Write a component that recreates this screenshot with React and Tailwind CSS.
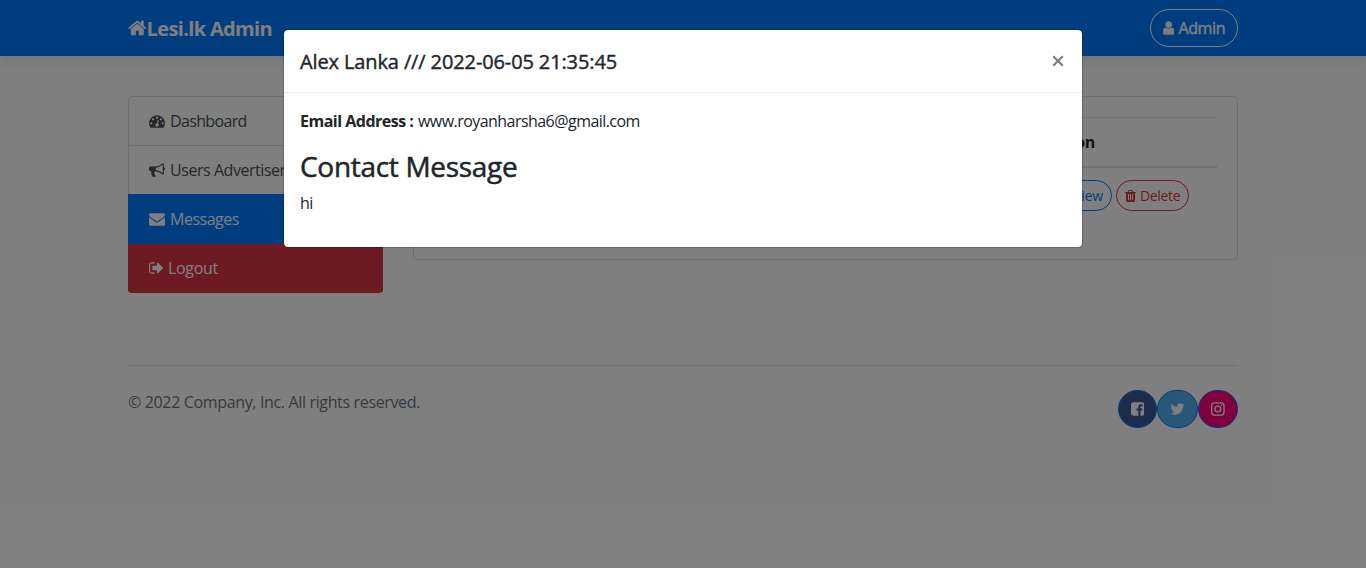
const ICONS = {
  home: ['64 0 1664 1792', 'M1472 992v480q0 26-19 45t-45 19h-384v-384h-256v384h-384q-26 0-45-19t-19-45v-480q0-1 .5-3t.5-3l575-474 575 474q1 2 1 6zm223-69l-62 74q-8 9-21 11h-3q-13 0-21-7l-692-577-692 577q-12 8-24 7-13-2-21-11l-62-74q-8-10-7-23.5t11-21.5l719-599q32-26 76-26t76 26l244 204v-195q0-14 9-23t23-9h192q14 0 23 9t9 23v408l219 182q10 8 11 21.5t-7 23.5z'],
  user: ['256 0 1280 1792', 'M1536 1399q0 109-62.5 187t-150.5 78h-854q-88 0-150.5-78t-62.5-187q0-85 8.5-160.5t31.5-152 58.5-131 94-89 134.5-34.5q131 128 313 128t313-128q76 0 134.5 34.5t94 89 58.5 131 31.5 152 8.5 160.5zm-256-887q0 159-112.5 271.5t-271.5 112.5-271.5-112.5-112.5-271.5 112.5-271.5 271.5-112.5 271.5 112.5 112.5 271.5z'],
  envelope: ['0 0 1792 1792', 'M1792 710v794q0 66-47 113t-113 47h-1472q-66 0-113-47t-47-113v-794q44 49 101 87 362 246 497 345 57 42 92.5 65.5t94.5 48 110 24.5h2q51 0 110-24.5t94.5-48 92.5-65.5q170-123 498-345 57-39 100-87zm0-294q0 79-49 151t-122 123q-376 261-468 325-10 7-42.5 31t-54 38.5-52 32.5-57.5 27-50 9h-2q-23 0-50-9t-57.5-27-52-32.5-54-38.5-42.5-31q-91-64-262-182.5t-205-142.5q-62-42-117-115.5t-55-136.5q0-78 41.5-130t118.5-52h1472q65 0 112.5 47t47.5 113z'],
  signOut: ['64 0 1664 1792', 'M704 1440q0 4 1 20t.5 26.5-3 23.5-10 19.5-20.5 6.5h-320q-119 0-203.5-84.5t-84.5-203.5v-704q0-119 84.5-203.5t203.5-84.5h320q13 0 22.5 9.5t9.5 22.5q0 4 1 20t.5 26.5-3 23.5-10 19.5-20.5 6.5h-320q-66 0-113 47t-47 113v704q0 66 47 113t113 47h312l11.5 1 11.5 3 8 5.5 7 9 2 13.5zm928-544q0 26-19 45l-544 544q-19 19-45 19t-45-19-19-45v-288h-448q-26 0-45-19t-19-45v-384q0-26 19-45t45-19h448v-288q0-26 19-45t45-19 45 19l544 544q19 19 19 45z'],
  trash: ['192 0 1408 1792', 'M704 1376v-704q0-14-9-23t-23-9h-64q-14 0-23 9t-9 23v704q0 14 9 23t23 9h64q14 0 23-9t9-23zm256 0v-704q0-14-9-23t-23-9h-64q-14 0-23 9t-9 23v704q0 14 9 23t23 9h64q14 0 23-9t9-23zm256 0v-704q0-14-9-23t-23-9h-64q-14 0-23 9t-9 23v704q0 14 9 23t23 9h64q14 0 23-9t9-23zm-544-992h448l-48-117q-7-9-17-11h-317q-10 2-17 11zm928 32v64q0 14-9 23t-23 9h-96v948q0 83-47 143.5t-113 60.5h-832q-66 0-113-58.5t-47-141.5v-952h-96q-14 0-23-9t-9-23v-64q0-14 9-23t23-9h309l70-167q15-37 54-63t79-26h320q40 0 79 26t54 63l70 167h309q14 0 23 9t9 23z'],
  bullhorn: ['0 0 1792 1792', 'M1664 640q53 0 90.5 37.5t37.5 90.5-37.5 90.5-90.5 37.5v384q0 52-38 90t-90 38q-417-347-812-380-58 19-91 66t-31 100.5 40 92.5q-20 33-23 65.5t6 58 33.5 55 48 50 61.5 50.5q-29 58-111.5 83t-168.5 11.5-132-55.5q-7-23-29.5-87.5t-32-94.5-23-89-15-101 3.5-98.5 22-110.5h-122q-66 0-113-47t-47-113v-192q0-66 47-113t113-47h480q435 0 896-384 52 0 90 38t38 90v384zm-128 604v-954q-394 302-768 343v270q377 42 768 341z'],
  gauge: ['0 0 1792 1792', 'M384 1152q0-53-37.5-90.5t-90.5-37.5-90.5 37.5-37.5 90.5 37.5 90.5 90.5 37.5 90.5-37.5 37.5-90.5zm192-448q0-53-37.5-90.5t-90.5-37.5-90.5 37.5-37.5 90.5 37.5 90.5 90.5 37.5 90.5-37.5 37.5-90.5zm428 481l101-382q6-26-7.5-48.5t-38.5-29.5-48 6.5-30 39.5l-101 382q-60 5-107 43.5t-63 98.5q-20 77 20 146t117 89 146-20 89-117q16-60-6-117t-72-91zm660-33q0-53-37.5-90.5t-90.5-37.5-90.5 37.5-37.5 90.5 37.5 90.5 90.5 37.5 90.5-37.5 37.5-90.5zm-640-640q0-53-37.5-90.5t-90.5-37.5-90.5 37.5-37.5 90.5 37.5 90.5 90.5 37.5 90.5-37.5 37.5-90.5zm448 192q0-53-37.5-90.5t-90.5-37.5-90.5 37.5-37.5 90.5 37.5 90.5 90.5 37.5 90.5-37.5 37.5-90.5zm320 448q0 261-141 483-19 29-54 29h-1402q-35 0-54-29-141-221-141-483 0-182 71-348t191-286 286-191 348-71 348 71 286 191 191 286 71 348z'],
  facebook: ['128 0 1536 1792', 'M1376 128q119 0 203.5 84.5t84.5 203.5v960q0 119-84.5 203.5t-203.5 84.5h-188v-595h199l30-232h-229v-148q0-56 23.5-84t91.5-28l122-1v-207q-63-9-178-9-136 0-217.5 80t-81.5 226v171h-200v232h200v595h-532q-119 0-203.5-84.5t-84.5-203.5v-960q0-119 84.5-203.5t203.5-84.5h960z'],
  twitter: ['64 0 1664 1792', 'M1684 408q-67 98-162 167 1 14 1 42 0 130-38 259.5t-115.5 248.5-184.5 210.5-258 146-323 54.5q-271 0-496-145 35 4 78 4 225 0 401-138-105-2-188-64.5t-114-159.5q33 5 61 5 43 0 85-11-112-23-185.5-111.5t-73.5-205.5v-4q68 38 146 41-66-44-105-115t-39-154q0-88 44-163 121 149 294.5 238.5t371.5 99.5q-8-38-8-74 0-134 94.5-228.5t228.5-94.5q140 0 236 102 109-21 205-78-37 115-142 178 93-10 186-50z'],
};

function Icon({ name, className }) {
  const [box, d] = ICONS[name];
  return (
    <svg viewBox={box} fill="currentColor" className={`shrink-0 ${className}`}>
      <path d={d} />
    </svg>
  );
}

function Instagram() {
  return (
    <svg viewBox="0 0 1536 1792" fill="none" stroke="currentColor" className="h-4 w-[13.7px] shrink-0">
      <rect x="75" y="203" width="1386" height="1386" rx="340" strokeWidth="150" />
      <circle cx="768" cy="896" r="325" strokeWidth="150" />
      <circle cx="1178" cy="486" r="92" fill="currentColor" stroke="none" />
    </svg>
  );
}

function SideItem({ icon, iconClass, label, textClass, className }) {
  return (
    <a className={`flex items-center px-5 ${className}`}>
      <Icon name={icon} className={iconClass} />
      <span className={`whitespace-nowrap ${textClass}`}>{label}</span>
    </a>
  );
}

function Page() {
  return (
    <div className="h-full bg-white">
      <nav className="h-14 bg-[#007bff] shadow-[0_4px_12px_rgba(0,0,0,0.1)]">
        <div className="mx-auto flex h-full w-[1110px] items-center justify-between text-white">
          <a className="flex items-center text-[20px] font-bold">
            <Icon name="home" className="h-5 w-[18.6px]" />
            <span className="pt-0.5 tracking-[-0.65px]">Lesi.lk Admin</span>
          </a>
          <a className="flex h-[38px] w-[88px] items-center rounded-full border border-[#f8f9fa] pl-3 text-[#f8f9fa]">
            <Icon name="user" className="h-4 w-[11.4px]" />
            <span className="ml-1 tracking-[-0.35px] [-webkit-text-stroke:0.4px]">Admin</span>
          </a>
        </div>
      </nav>

      <div className="mx-auto mt-10 flex w-[1110px] items-start gap-[30px]">
        <aside className="w-[255px] overflow-hidden rounded text-[#495057]">
          <SideItem icon="gauge" iconClass="h-4 w-4" label="Dashboard" textClass="ml-[5px] tracking-[-0.65px]" className="h-[50px] rounded-t border border-black/[0.125]" />
          <SideItem icon="bullhorn" iconClass="h-4 w-4" label="Users Advertisements" textClass="ml-[5px] tracking-[-0.45px]" className="h-12 border-x border-black/[0.125]" />
          <SideItem icon="envelope" iconClass="h-4 w-4" label="Messages" textClass="ml-[5px] tracking-[-0.5px]" className="h-[50px] border border-[#007bff] bg-[#007bff] text-white" />
          <SideItem icon="signOut" iconClass="h-4 w-[14.9px]" label="Logout" textClass="ml-1 tracking-[-0.3px]" className="h-[49px] border-x border-[#dc3545] bg-[#dc3545] pb-px text-white" />
        </aside>

        <main className="h-[164px] flex-1 rounded border border-black/[0.125] p-5">
          <div className="flex h-[51px] items-center justify-end border-b-2 border-t border-[#dee2e6] pr-[122px] font-bold">
            <span className="tracking-[-0.3px] text-[#212529]">Action</span>
          </div>
          <div className="mt-3 flex justify-end gap-1 pr-7 text-[14px]">
            <a className="flex h-[31px] items-center rounded-full border border-[#007bff] px-2 text-[#007bff]">
              <span className="tracking-[-0.2px]">View</span>
            </a>
            <a className="flex h-[31px] w-[73px] items-center rounded-full border border-[#dc3545] pl-2 text-[#dc3545]">
              <Icon name="trash" className="h-3.5 w-[11px]" />
              <span className="ml-1 tracking-[-0.35px]">Delete</span>
            </a>
          </div>
        </main>
      </div>

      <footer className="mx-auto mt-[72px] flex w-[1110px] justify-between border-t border-[#dee2e6] pt-6 text-[#6c757d]">
        <p className="tracking-[-0.35px]">© 2022 Company, Inc. All rights reserved.</p>
        <div className="flex text-white">
          <a className="flex h-[38px] w-[39px] items-center justify-center rounded-full border border-[#007bff] bg-[#3b5998]">
            <Icon name="facebook" className="h-4 w-[13.7px]" />
          </a>
          <a className="flex h-[38px] w-[41px] items-center justify-center rounded-full border border-[#007bff] bg-[#55acee]">
            <Icon name="twitter" className="h-4 w-[14.9px]" />
          </a>
          <a className="flex h-[38px] w-10 items-center justify-center rounded-full border border-[#007bff] bg-[#ff007f]">
            <Instagram />
          </a>
        </div>
      </footer>
    </div>
  );
}

function MessageDialog() {
  return (
    <div className="absolute inset-0 flex items-start justify-center bg-black/50 pt-[29px]">
      <section className="h-[219px] w-[800px] rounded-[5px] border border-black/20 bg-white bg-clip-padding text-[#212529]">
        <header className="flex h-[63px] items-center justify-between border-b border-[#e9ecef] pl-4 pr-[18px]">
          <h5 className="pt-px text-[20px] tracking-[-0.12px] [-webkit-text-stroke:0.4px]">Alex Lanka /// 2022-06-05 21:35:45</h5>
          <svg viewBox="0 0 12 12" className="h-3 w-3 text-[#7f7f7f]" stroke="currentColor" strokeWidth="2.2">
            <path d="M1.2 1.2l9.6 9.6M10.8 1.2l-9.6 9.6" />
          </svg>
        </header>
        <div className="px-4 pt-4">
          <p className="flex leading-6">
            <b className="w-[118px] tracking-[-0.5px]">Email Address :</b>
            <span className="tracking-[-0.55px]">www.royanharsha6@gmail.com</span>
          </p>
          <h3 className="mt-4 text-[28px] leading-[34px] tracking-[-0.3px] [-webkit-text-stroke:0.5px]">Contact Message</h3>
          <p className="mt-2 leading-6 tracking-[-0.5px]">hi</p>
        </div>
      </section>
    </div>
  );
}

export default function App() {
  return (
    <div className="relative h-[568px] w-[1366px] overflow-hidden font-['Open_Sans','Noto_Sans',sans-serif] text-[16px] leading-6">
      <Page />
      <MessageDialog />
    </div>
  );
}
